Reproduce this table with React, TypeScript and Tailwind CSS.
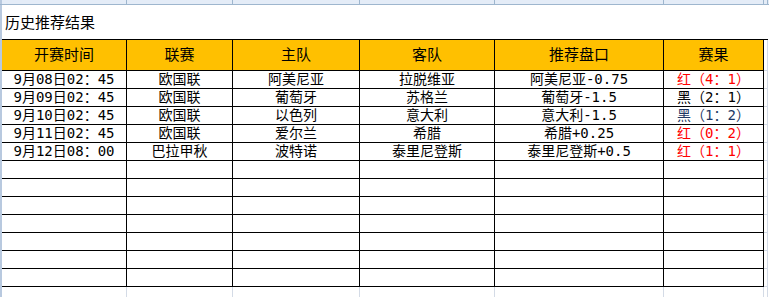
import React from "react";

const cols = ["w-[125px]", "w-[106px]", "w-[127px]", "w-[135px]", "w-[169px]", "w-[100px]"];

const heads = ["开赛时间", "联赛", "主队", "客队", "推荐盘口", "赛果"];

type Row = { cells: string[]; color: string };

const rows: Row[] = [
  { cells: ["9月08日02：45", "欧国联", "阿美尼亚", "拉脱维亚", "阿美尼亚-0.75", "红（4：1）"], color: "text-[#ff0000]" },
  { cells: ["9月09日02：45", "欧国联", "葡萄牙", "苏格兰", "葡萄牙-1.5", "黑（2：1）"], color: "text-black" },
  { cells: ["9月10日02：45", "欧国联", "以色列", "意大利", "意大利-1.5", "黑（1：2）"], color: "text-[#1f3864]" },
  { cells: ["9月11日02：45", "欧国联", "爱尔兰", "希腊", "希腊+0.25", "红（0：2）"], color: "text-[#ff0000]" },
  { cells: ["9月12日08：00", "巴拉甲秋", "波特诺", "泰里尼登斯", "泰里尼登斯+0.5", "红（1：1）"], color: "text-[#ff0000]" },
];

const emptyRows = 7;

const App: React.FC = () => {
  return (
    <div
      className="w-[769px] h-[297px] overflow-hidden bg-white text-black"
      style={{ fontFamily: '"DejaVu Sans Mono", "Noto Sans CJK SC", monospace' }}
    >
      {/* Column header strip (cut off) */}
      <div className="flex h-[5px] bg-[#e4ecf7] border-b border-[#9eb6ce]">
        <div className="w-[2px] bg-[#b8c9df]" />
        {cols.map((c, i) => (
          <div key={i} className={`${c} border-r border-[#9eb6ce]`} />
        ))}
        <div className="w-[4px] border-r border-[#9eb6ce]" />
      </div>

      <div className="flex">
        <div className="w-[2px] shrink-0 bg-[#b8c9df]" />
        <div className="flex flex-col">
          {/* Title */}
          <div className="h-[34px] flex items-center pl-[3px] pt-[1px] text-[15px] leading-[20px]">
            历史推荐结果
          </div>

          {/* Header row */}
          <div className="flex border-t border-black">
            {heads.map((h, i) => (
              <div
                key={i}
                className={`${cols[i]} h-[31px] bg-[#ffc000] border-r border-b border-black flex items-center justify-center text-[15px] leading-[20px]`}
              >
                {h}
              </div>
            ))}
            <div className="w-[4px] h-[31px] border-r border-b border-[#d4dbe6]" />
          </div>

          {/* Data rows */}
          {rows.map((r, ri) => (
            <div key={ri} className="flex">
              {r.cells.map((c, ci) => (
                <div
                  key={ci}
                  className={`${cols[ci]} h-[18px] border-r border-b border-black flex items-center justify-center text-[14px] leading-[17px] overflow-hidden ${
                    ci === 5 ? r.color : ""
                  }`}
                >
                  {c}
                </div>
              ))}
              <div className="w-[4px] h-[18px] border-r border-b border-[#d4dbe6]" />
            </div>
          ))}

          {/* Empty rows */}
          {Array.from({ length: emptyRows }).map((_, ri) => (
            <div key={ri} className="flex">
              {cols.map((c, ci) => (
                <div key={ci} className={`${c} h-[18px] border-r border-b border-black`} />
              ))}
              <div className="w-[4px] h-[18px] border-r border-b border-[#d4dbe6]" />
            </div>
          ))}

          {/* Grid below the table */}
          <div className="flex">
            {cols.map((c, ci) => (
              <div key={ci} className={`${c} h-[18px] border-r border-[#d4dbe6]`} />
            ))}
            <div className="w-[4px] h-[18px] border-r border-[#d4dbe6]" />
          </div>
        </div>
      </div>
    </div>
  );
};

export default App;
